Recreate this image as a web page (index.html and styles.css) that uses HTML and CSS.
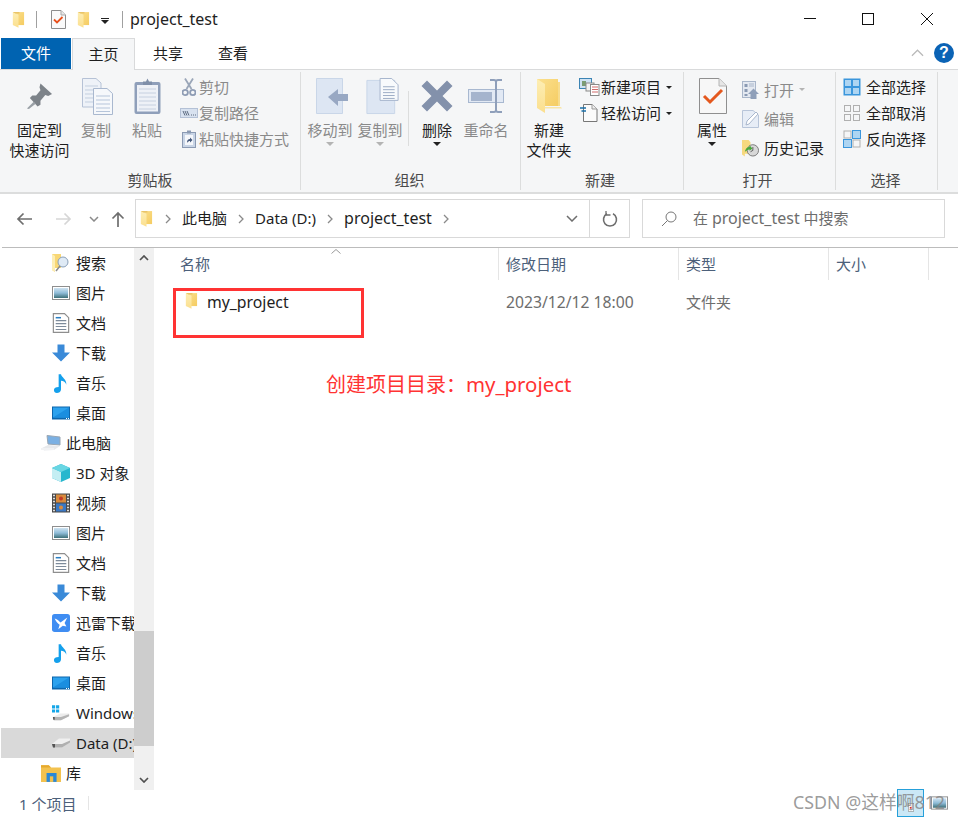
FILE: index.html
```html
<!DOCTYPE html>
<html lang="zh-CN">
<head>
<meta charset="utf-8">
<title>project_test</title>
<link rel="stylesheet" href="styles.css">
</head>
<body>
<svg class="defs" aria-hidden="true">
  <defs>
    <linearGradient id="fy" x1="0" y1="0" x2="1" y2="1"><stop offset="0" stop-color="#fbe08e"/><stop offset="1" stop-color="#f5cc62"/></linearGradient>
    <linearGradient id="fp" x1="0" y1="0" x2="0" y2="1"><stop offset="0" stop-color="#fdeeb4"/><stop offset="1" stop-color="#fbdf8e"/></linearGradient>
    <linearGradient id="sky" x1="0" y1="0" x2="0" y2="1"><stop offset="0" stop-color="#cfe3f1"/><stop offset=".5" stop-color="#8fbcd8"/><stop offset="1" stop-color="#3d6f78"/></linearGradient>
    <symbol id="folder" viewBox="0 0 14 18"><path d="M1 1H13V15H5L1 15Z" fill="url(#fy)"/><path d="M1 1L7 4V18L1 15Z" fill="url(#fp)"/><path d="M1 1H8V2.500H3.600Z" fill="#e9c469"/></symbol>
    <symbol id="doccheck" viewBox="0 0 15 19"><path d="M.5.5H10L14.500 5V18.500H.5Z" fill="#fafafa" stroke="#8d8d8d"/><path d="M10 .5V5H14.500" fill="#e8e8e8" stroke="#a8a8a8"/><path d="M3 9.500L6 12.500L11.500 7" fill="none" stroke="#e8501c" stroke-width="1.800"/></symbol>
    <symbol id="pin" viewBox="0 0 28 28"><path d="M15 1L27 12L23 14L20 13L15 19L15 23L12 25L4 16L6.500 13.500L10.500 13.500L15 8L14 5Z" fill="#7d8389"/><path d="M8 20L1 27L3 27.500L10 22Z" fill="#9aa0a6"/></symbol>
    <symbol id="copy" viewBox="0 0 31 37"><path d="M.5.5H14L19 5V29H.5Z" fill="#eef2f8" stroke="#b6c2d6"/><path d="M3 8H16M3 12H16M3 16H16M3 20H16M3 24H16" stroke="#c3cfdf"/><path d="M11.500 10.500H25L30.500 15.500V36.500H11.500Z" fill="#f6f8fb" stroke="#a9b8cf"/><path d="M14 18H28M14 22H28M14 26H28M14 30H28M14 33.500H28" stroke="#b6c5da"/></symbol>
    <symbol id="paste" viewBox="0 0 27 37"><path d="M2.500 4H24.500A2 2 0 0 1 26.500 6V34A2 2 0 0 1 24.500 36H2.500A2 2 0 0 1 .5 34V6A2 2 0 0 1 2.500 4Z" fill="#8f9fba"/><rect x="3" y="7" width="21" height="26.500" fill="#eef1f7"/><path d="M5 11H22M5 15H22M5 19H22M5 23H22M5 27H22M5 31H22" stroke="#c6d0e0"/><path d="M9 3.500H12L13.500 .5L15 3.500H18V7H9Z" fill="#7f8fa9"/></symbol>
    <symbol id="scissors" viewBox="0 0 14 19"><path d="M3 .5L9.500 11M11 .5L4.500 11" stroke="#9aa6b8" stroke-width="1.800" fill="none"/><circle cx="3.200" cy="14.500" r="2.700" fill="none" stroke="#8e9cb4" stroke-width="1.800"/><circle cx="10.800" cy="14.500" r="2.700" fill="none" stroke="#8e9cb4" stroke-width="1.800"/></symbol>
    <symbol id="pathi" viewBox="0 0 18 12"><rect x=".5" y="1.500" width="17" height="9" fill="#d8e2f0" stroke="#b4c1d6"/><path d="M3 4L5 8.500M5 4L7 8.500M7 4L9 8.500" stroke="#5c6a80"/><path d="M11 8H12M13 8H14M15 8H16" stroke="#5c6a80"/></symbol>
    <symbol id="shortcut" viewBox="0 0 14 18"><rect x=".5" y="2.500" width="13" height="15" fill="#c9d5e6" stroke="#8b9ab3"/><rect x="3" y="5" width="8" height="10" fill="#f5f7fb"/><path d="M5 .5H9V3.500H5Z" fill="#8b9ab3"/><path d="M5 13C5 10 6 9 8 9V7.500L10.500 10L8 12.500V11C7 11 6 11.500 5 13Z" fill="#44587a"/></symbol>
    <symbol id="moveto" viewBox="0 0 33 37"><path d="M.5.5H26.500V35.500H.5Z" fill="#dde6f3" stroke="#c9d6e8"/><path d="M12 19L22 11V16H32V23H22V28L12 19Z" fill="#98a8c3"/></symbol>
    <symbol id="copyto" viewBox="0 0 33 38"><path d="M.5 2.500H29V36.500H.5Z" fill="#dde6f3" stroke="#c9d6e8"/><path d="M14 .5H26L32.500 7V23H14Z" fill="#f8fafc" stroke="#a5b4cc"/><path d="M17 9H29M17 12H29M17 15H29M17 18H29M17 21H29" stroke="#9cacc4"/></symbol>
    <symbol id="del" viewBox="0 0 32 32"><path d="M6 .5L16 10.500L26 .5L31.500 6L21.500 16L31.500 26L26 31.500L16 21.500L6 31.500L.5 26L10.500 16L.5 6Z" fill="#8391ab"/></symbol>
    <symbol id="rename" viewBox="0 0 36 34"><rect x=".5" y="10.500" width="35" height="13" fill="#e2e9f4" stroke="#a8b8d0"/><rect x="3" y="13" width="21" height="9" fill="#a5b4cd"/><path d="M22 1H26C27.500 1 28 2 28 3V31C28 32 27.500 33 26 33H22M34 1H30C28.500 1 28 2 28 3M28 31C28 32 28.500 33 30 33H34" fill="none" stroke="#8f9fba" stroke-width="2"/></symbol>
    <symbol id="bigfolder" viewBox="0 0 26 36"><path d="M1 1H22V28H9V30H1Z" fill="url(#fy)"/><path d="M22 4H24V28H22Z" fill="#f7dc8d"/><path d="M1 1L9 6V35L1 30Z" fill="url(#fp)"/><path d="M9 29H25L26 30.500H9Z" fill="#f9e5a6"/></symbol>
    <symbol id="newitem" viewBox="0 0 21 18"><rect x=".5" y=".5" width="12" height="10" fill="#cfe2f3" stroke="#3c84b4"/><rect x="3" y="3" width="4" height="5" fill="#7b9c72"/><rect x="7" y="5" width="8" height="8" fill="#f2f2f2" stroke="#8a8a8a"/><rect x="11.500" y="6.500" width="8.500" height="11" fill="#fff" stroke="#8a8a8a"/><path d="M13 9H19M13 11.500H19M13 14H19" stroke="#d06a6a"/></symbol>
    <symbol id="easy" viewBox="0 0 18 18"><path d="M3.500.5H12L17 5V17.500H3.500Z" fill="#fbfbfb" stroke="#777"/><path d="M12 .5V5H17" fill="#eee" stroke="#999"/><path d="M0 4H6M1.500 7H6" stroke="#1a6fa8" stroke-width="1.400"/></symbol>
    <symbol id="bigprops" viewBox="0 0 28 36"><path d="M.5.5H20L27.500 8V35.500H.5Z" fill="#f7f7f7" stroke="#8f8f8f"/><path d="M20 .5V8H27.500" fill="#e6e6e6" stroke="#b4b4b4"/><path d="M5 18L11 24L23 12" fill="none" stroke="#e4581e" stroke-width="3"/></symbol>
    <symbol id="openi" viewBox="0 0 17 18"><rect x=".5" y=".5" width="13" height="16" fill="#e4e9f1" stroke="#a9b6ca"/><rect x="2.500" y="3" width="3" height="3" fill="#8a9ab3"/><rect x="2.500" y="8" width="3" height="3" fill="#8a9ab3"/><rect x="2.500" y="13" width="3" height="2" fill="#8a9ab3"/><path d="M7 3H12M7 5H12" stroke="#a9b6ca"/><path d="M6 13L11.500 7.500L17 13H14.500V18H8.500V13Z" fill="#8f9fb9"/></symbol>
    <symbol id="editi" viewBox="0 0 17 18"><path d="M.5.5H11L16.500 5V17.500H.5Z" fill="#e7edf6" stroke="#b8c5d9"/><path d="M4 15L5 11L14 2L16 4L7 14Z" fill="#fff" stroke="#a9b7cc"/></symbol>
    <symbol id="history" viewBox="0 0 18 18"><path d="M0 .5H7L9 3V15H3V18L0 16Z" fill="#f6d97f"/><circle cx="11.500" cy="11.500" r="6" fill="#d8d8d8" stroke="#777"/><path d="M11.500 8V11.500L9 13" fill="none" stroke="#555"/><path d="M3 13C4 9 6 8 8 8V6L11 9.500L8 12V10.500C6 10.500 5 11.500 3 13Z" fill="#4aa83a"/></symbol>
    <symbol id="selall" viewBox="0 0 18 18"><rect x=".5" y=".5" width="17" height="17" fill="#3b96dc"/><rect x="2" y="2" width="6" height="6" fill="#aed5f2"/><rect x="10" y="2" width="6" height="6" fill="#aed5f2"/><rect x="2" y="10" width="6" height="6" fill="#aed5f2"/><rect x="10" y="10" width="6" height="6" fill="#aed5f2"/></symbol>
    <symbol id="selnone" viewBox="0 0 18 18"><rect x="1.500" y="1.500" width="6" height="6" fill="none" stroke="#b0b0b0"/><rect x="10.500" y="1.500" width="6" height="6" fill="none" stroke="#b0b0b0"/><rect x="1.500" y="10.500" width="6" height="6" fill="none" stroke="#b0b0b0"/><rect x="10.500" y="10.500" width="6" height="6" fill="none" stroke="#b0b0b0"/></symbol>
    <symbol id="selinv" viewBox="0 0 18 18"><rect x="1" y="1" width="7" height="7" fill="none" stroke="#b0b0b0"/><rect x="9.500" y=".5" width="8" height="8" fill="#aed5f2" stroke="#3b96dc"/><rect x=".5" y="9.500" width="8" height="8" fill="#aed5f2" stroke="#3b96dc"/><rect x="10" y="10" width="7" height="7" fill="none" stroke="#b0b0b0"/></symbol>
    <symbol id="searchf" viewBox="0 0 18 18"><path d="M0 0H9V14H3V18L0 16Z" fill="#f8d775"/><path d="M0 0L3 2V18L0 16Z" fill="#fdeeb4"/><circle cx="11" cy="8" r="5" fill="#dfeaf5" stroke="#8aa0b8"/><path d="M8 12L4 17" stroke="#8a8a8a" stroke-width="1.500"/></symbol>
    <symbol id="pics" viewBox="0 0 18 14"><rect x=".5" y=".5" width="17" height="13" fill="#fff" stroke="#8e8e8e"/><rect x="2" y="2" width="14" height="10" fill="url(#sky)"/></symbol>
    <symbol id="docs" viewBox="0 0 14 17"><path d="M.5.5H10L13.500 4V16.500H.5Z" fill="#fff" stroke="#8e8e8e"/><path d="M2.500 6.500H11.500M2.500 9H11.500M2.500 11.500H11.500M2.500 14H11.500" stroke="#7d8b9b"/><path d="M2.500 4H7" stroke="#2a7fc4" stroke-width="1.300"/></symbol>
    <symbol id="down" viewBox="0 0 18 17"><path d="M5.500 0H12.500V8H18L9 17L0 8H5.500Z" fill="#3a8ad8"/></symbol>
    <symbol id="music" viewBox="0 0 12 17"><path d="M4 1H6C6.500 4 11 5 10.500 10C10 7.500 8 6.500 6 6.500V14C6 16 4 17 2.500 17C1 17 0 16 0 14.500C0 13 1.500 12 4 12Z" fill="#14a0ec"/></symbol>
    <symbol id="desk" viewBox="0 0 18 13"><rect width="18" height="13" fill="#0c66ad"/><rect x="1" y="1" width="16" height="10" fill="#2ca2ee"/><path d="M1 11L17 1V11Z" fill="#1a8ee0"/><path d="M14 12H15M16 12H17" stroke="#fff"/></symbol>
    <symbol id="pc" viewBox="0 0 20 16"><path d="M6 .5L19 2V10L7 9Z" fill="#7bb0e3" stroke="#9aa6b2"/><path d="M1 13L7 10L19 11L13 15L3 15.500Z" fill="#e7e9ec"/><path d="M0 13H13V15H0Z" fill="#f1f2f4"/></symbol>
    <symbol id="cube" viewBox="0 0 18 18"><path d="M9 0L18 4V14L9 18L0 14V4Z" fill="#27b7ce"/><path d="M0 4L9 8V18L0 14Z" fill="#c4eef3"/><path d="M9 0L18 4L9 8L0 4Z" fill="#69d6e3"/></symbol>
    <symbol id="video" viewBox="0 0 18 19"><rect width="18" height="19" fill="#4a4a4a"/><path d="M1 2H3M1 5H3M1 8H3M1 11H3M1 14H3M1 17H3M15 2H17M15 5H17M15 8H17M15 11H17M15 14H17M15 17H17" stroke="#ddd" stroke-width="1.400"/><rect x="4" y="1" width="10" height="8" fill="#d88a3c"/><rect x="4" y="10" width="10" height="8" fill="#3a78c4"/><circle cx="9" cy="5" r="2" fill="#c23a2a"/><circle cx="9" cy="14" r="2" fill="#d88a3c"/></symbol>
    <symbol id="thunder" viewBox="0 0 20 20"><rect width="20" height="20" rx="3" fill="#3f8df2"/><path d="M3 5C6 6 8 8 9.500 9.500L17 4L14 10L16 14L12 13L7 17L8.500 12C6 10 4 8 3 5Z" fill="#fff"/></symbol>
    <symbol id="win" viewBox="0 0 20 17"><path d="M0 0H3.500V3.500H0ZM4.500 0H8V3.500H4.500ZM0 4.500H3.500V8H0ZM4.500 4.500H8V8H4.500Z" fill="#14a6e8"/><path d="M1 13L9 9H19V12L10 16.500H2Z" fill="#ececec"/><path d="M1 13H10L19 10V12L10 16.500H2Z" fill="#b4b4b4"/><path d="M1 13L3 13V16L1.500 16Z" fill="#555"/></symbol>
    <symbol id="drive" viewBox="0 0 18 10"><path d="M0 6L7 .5H18V4L10 9.500H1Z" fill="#f0f0f0"/><path d="M0 6H10L18 2.500V4.500L10 9.500H1Z" fill="#b0b0b0"/><path d="M0 6H3V9.500H1Z" fill="#555"/></symbol>
    <symbol id="lib" viewBox="0 0 18 16"><path d="M0 1H7L9 3H18V16H0Z" fill="#f3c24f"/><path d="M0 1H7L9 3H0Z" fill="#e6a92e"/><rect x="5" y="8" width="9" height="8" fill="#2a88d8"/><rect x="8" y="11" width="3" height="5" fill="#f3c24f"/></symbol>
    <symbol id="viewdetails" viewBox="0 0 10 14"><rect x=".5" y=".5" width="9" height="13" fill="#fff" stroke="#888"/><rect x="3" y="6" width="3" height="3" fill="#c33"/></symbol>
  </defs>
</svg>

<div class="window">
  <header class="titlebar">
    <div class="qat">
      <svg class="i-qf"><use href="#folder"/></svg>
      <span class="vsep"></span>
      <svg class="i-qd"><use href="#doccheck"/></svg>
      <svg class="i-qf"><use href="#folder"/></svg>
      <span class="qat-down"></span>
      <span class="vsep"></span>
      <span class="title lt">project_test</span>
    </div>
    <div class="winbtns">
      <svg class="winbtn" viewBox="0 0 14 14"><path d="M1 6.500H13" stroke="#111" stroke-width="1"/></svg>
      <svg class="winbtn" viewBox="0 0 14 14"><rect x="1.500" y="1.500" width="11" height="11" fill="none" stroke="#111"/></svg>
      <svg class="winbtn" viewBox="0 0 14 14"><path d="M1 1L13 13M13 1L1 13" stroke="#111" stroke-width="1"/></svg>
    </div>
  </header>

  <nav class="tabs">
    <span class="tab tab-file">文件</span>
    <span class="tab tab-active">主页</span>
    <span class="tab">共享</span>
    <span class="tab">查看</span>
    <svg class="collapse" viewBox="0 0 14 8"><path d="M1 7L7 1L13 7" fill="none" stroke="#b9b9b9" stroke-width="1.300"/></svg>
    <span class="help">?</span>
  </nav>

  <section class="ribbon">
    <div class="group g1">
      <div class="group-body">
        <div class="big b75"><span class="bigicon"><svg class="i-pin"><use href="#pin"/></svg></span><span class="biglabel">固定到<br>快速访问</span></div>
        <div class="big b38 off"><span class="bigicon"><svg class="i-copy"><use href="#copy"/></svg></span><span class="biglabel">复制</span></div>
        <div class="big b64 off"><span class="bigicon"><svg class="i-paste"><use href="#paste"/></svg></span><span class="biglabel">粘贴</span></div>
        <div class="smalls">
          <div class="small off"><span class="sicon"><svg class="i-sc"><use href="#scissors"/></svg></span>剪切</div>
          <div class="small off"><span class="sicon"><svg class="i-path"><use href="#pathi"/></svg></span>复制路径</div>
          <div class="small off"><span class="sicon"><svg class="i-short"><use href="#shortcut"/></svg></span>粘贴快捷方式</div>
        </div>
      </div>
      <div class="group-label">剪贴板</div>
    </div>

    <div class="group g2">
      <div class="group-body">
        <div class="big b50 off"><span class="bigicon"><svg class="i-move"><use href="#moveto"/></svg></span><span class="biglabel">移动到</span><span class="caret caret-off"></span></div>
        <div class="big b50 off"><span class="bigicon"><svg class="i-move"><use href="#copyto"/></svg></span><span class="biglabel">复制到</span><span class="caret caret-off"></span></div>
        <span class="gsep"></span>
        <div class="big b50"><span class="bigicon"><svg class="i-del"><use href="#del"/></svg></span><span class="biglabel">删除</span><span class="caret"></span></div>
        <div class="big b48 off"><span class="bigicon"><svg class="i-ren"><use href="#rename"/></svg></span><span class="biglabel">重命名</span></div>
      </div>
      <div class="group-label">组织</div>
    </div>

    <div class="group g3">
      <div class="group-body">
        <div class="big b56"><span class="bigicon"><svg class="i-bf"><use href="#bigfolder"/></svg></span><span class="biglabel">新建<br>文件夹</span></div>
        <div class="smalls">
          <div class="small"><span class="sicon s-wide"><svg class="i-new"><use href="#newitem"/></svg></span>新建项目<span class="caret caret-inline"></span></div>
          <div class="small"><span class="sicon s-wide"><svg class="i-easy"><use href="#easy"/></svg></span>轻松访问<span class="caret caret-inline"></span></div>
        </div>
      </div>
      <div class="group-label">新建</div>
    </div>

    <div class="group g4">
      <div class="group-body">
        <div class="big b56"><span class="bigicon"><svg class="i-prop"><use href="#bigprops"/></svg></span><span class="biglabel">属性</span><span class="caret"></span></div>
        <div class="smalls smalls-tall">
          <div class="small off"><span class="sicon"><svg class="i-17"><use href="#openi"/></svg></span>打开<span class="caret caret-inline caret-off"></span></div>
          <div class="small off"><span class="sicon"><svg class="i-17"><use href="#editi"/></svg></span>编辑</div>
          <div class="small"><span class="sicon"><svg class="i-17"><use href="#history"/></svg></span>历史记录</div>
        </div>
      </div>
      <div class="group-label">打开</div>
    </div>

    <div class="group g5">
      <div class="group-body">
        <div class="smalls">
          <div class="small"><span class="sicon"><svg class="i-18"><use href="#selall"/></svg></span>全部选择</div>
          <div class="small"><span class="sicon"><svg class="i-18"><use href="#selnone"/></svg></span>全部取消</div>
          <div class="small"><span class="sicon"><svg class="i-18"><use href="#selinv"/></svg></span>反向选择</div>
        </div>
      </div>
      <div class="group-label">选择</div>
    </div>
  </section>

  <section class="addressrow">
    <div class="navbtns">
      <svg class="nav-back" viewBox="0 0 16 14"><path d="M16 7H2M7.500 1.500L2 7L7.500 12.500" fill="none" stroke="#6e6e6e" stroke-width="1.700"/></svg>
      <svg class="nav-fwd" viewBox="0 0 16 14"><path d="M0 7H14M8.500 1.500L14 7L8.500 12.500" fill="none" stroke="#d6d6d6" stroke-width="1.700"/></svg>
      <svg class="nav-drop" viewBox="0 0 10 6"><path d="M1 1L5 5L9 1" fill="none" stroke="#8a8a8a" stroke-width="1.500"/></svg>
      <svg class="nav-up" viewBox="0 0 14 16"><path d="M7 16V2M1.500 7.500L7 2L12.500 7.500" fill="none" stroke="#6e6e6e" stroke-width="1.700"/></svg>
    </div>
    <div class="addrbox">
      <svg class="addr-folder"><use href="#folder"/></svg>
      <svg class="crumb-sep" viewBox="0 0 6 10"><path d="M1 1L5 5L1 9" fill="none" stroke="#8a8a8a" stroke-width="1.300"/></svg>
      <span class="crumb">此电脑</span>
      <svg class="crumb-sep" viewBox="0 0 6 10"><path d="M1 1L5 5L1 9" fill="none" stroke="#8a8a8a" stroke-width="1.300"/></svg>
      <span class="crumb">Data (D:)</span>
      <svg class="crumb-sep" viewBox="0 0 6 10"><path d="M1 1L5 5L1 9" fill="none" stroke="#8a8a8a" stroke-width="1.300"/></svg>
      <span class="crumb lt">project_test</span>
      <svg class="crumb-sep" viewBox="0 0 6 10"><path d="M1 1L5 5L1 9" fill="none" stroke="#8a8a8a" stroke-width="1.300"/></svg>
      <svg class="addr-drop" viewBox="0 0 12 7"><path d="M1 1L6 6L11 1" fill="none" stroke="#6e6e6e" stroke-width="1.500"/></svg>
      <span class="addr-refresh"><svg class="refresh" viewBox="0 0 16 16"><path d="M5 2.800A6.500 6.500 0 1 0 11 2.800" fill="none" stroke="#6e6e6e" stroke-width="1.600"/><path d="M4 0V4.500H8.500" fill="none" stroke="#6e6e6e" stroke-width="1.300" transform="translate(0 -.5)"/></svg></span>
    </div>
    <div class="searchbox">
      <svg class="searchicon" viewBox="0 0 16 16"><circle cx="10" cy="6" r="5" fill="none" stroke="#777" stroke-width="1"/><path d="M6.500 9.500L1 15" stroke="#777" stroke-width="1"/></svg>
      <span class="search-text">在 <span class="lt">project_test</span> 中搜索</span>
    </div>
  </section>

  <main class="main">
    <aside class="sidebar">
      <div class="row"><svg class="ri"><use href="#searchf"/></svg><span>搜索</span></div>
      <div class="row"><svg class="ri"><use href="#pics"/></svg><span>图片</span></div>
      <div class="row"><svg class="ri"><use href="#docs"/></svg><span>文档</span></div>
      <div class="row"><svg class="ri"><use href="#down"/></svg><span>下载</span></div>
      <div class="row"><svg class="ri"><use href="#music"/></svg><span>音乐</span></div>
      <div class="row"><svg class="ri"><use href="#desk"/></svg><span>桌面</span></div>
      <div class="row row-top"><svg class="ri"><use href="#pc"/></svg><span>此电脑</span></div>
      <div class="row"><svg class="ri"><use href="#cube"/></svg><span>3D 对象</span></div>
      <div class="row"><svg class="ri"><use href="#video"/></svg><span>视频</span></div>
      <div class="row"><svg class="ri"><use href="#pics"/></svg><span>图片</span></div>
      <div class="row"><svg class="ri"><use href="#docs"/></svg><span>文档</span></div>
      <div class="row"><svg class="ri"><use href="#down"/></svg><span>下载</span></div>
      <div class="row"><svg class="ri"><use href="#thunder"/></svg><span>迅雷下载</span></div>
      <div class="row"><svg class="ri"><use href="#music"/></svg><span>音乐</span></div>
      <div class="row"><svg class="ri"><use href="#desk"/></svg><span>桌面</span></div>
      <div class="row row-lat"><svg class="ri"><use href="#win"/></svg><span>Windows (C:)</span></div>
      <div class="row row-sel row-lat"><svg class="ri"><use href="#drive"/></svg><span>Data (D:)</span></div>
      <div class="row row-top"><svg class="ri"><use href="#lib"/></svg><span>库</span></div>
    </aside>
    <div class="scrollbar">
      <span class="sb-arrow"><svg class="sb-chev" viewBox="0 0 10 6"><path d="M1 5L5 1L9 5" fill="none" stroke="#505050" stroke-width="1.700"/></svg></span>
      <span class="sb-space"></span>
      <span class="sb-thumb"></span>
      <span class="sb-rest"></span>
      <span class="sb-arrow"><svg class="sb-chev" viewBox="0 0 10 6"><path d="M1 1L5 5L9 1" fill="none" stroke="#505050" stroke-width="1.700"/></svg></span>
    </div>
    <div class="list">
      <svg class="sortcaret" viewBox="0 0 10 5"><path d="M.5 4.500L5 .5L9.500 4.500" fill="none" stroke="#9a9a9a"/></svg>
      <div class="head">
        <span class="col c-name head-name">名称</span>
        <span class="col c-date">修改日期</span>
        <span class="col c-type">类型</span>
        <span class="col c-size">大小</span>
      </div>
      <div class="file">
        <span class="col c-name file-name"><svg class="file-icon"><use href="#folder"/></svg><span class="lt-file">my_project</span></span>
        <span class="col c-date"><span class="lt-date">2023/12/12 18:00</span></span>
        <span class="col c-type">文件夹</span>
      </div>
    </div>
  </main>

  <footer class="status">
    <span class="count">1 个项目</span>
    <span class="status-sep"></span>
    <span class="view-sel"><svg class="view-doc"><use href="#viewdetails"/></svg></span>
    <svg class="view-other"><use href="#pics"/></svg>
  </footer>

  <div class="redbox"></div>
  <div class="note">创建项目目录：<span class="note-lt">my_project</span></div>
  <div class="watermark">CSDN @这样啊812</div>
</div>
</body>
</html>
```

FILE: styles.css
```css
* { box-sizing: border-box; }
html, body { margin: 0; padding: 0; background: #fff; }
body { font-family: "Noto Sans", "Noto Sans CJK SC", sans-serif; font-size: 15px; color: #1e1e1e; overflow: hidden; }
.defs { position: absolute; width: 0; height: 0; }
svg { display: block; flex: none; }
.lt { font-size: 16px; }
.lt-file { font-size: 15.8px; margin-top: 2px; }
.lt-date { font-size: 15.7px; margin-top: 2px; }

.window { position: relative; width: 958px; height: 819px; display: flex; flex-direction: column; overflow: hidden; background: #fff; }

/* title bar */
.titlebar { height: 38px; display: flex; align-items: center; justify-content: space-between; flex: none; }
.qat { display: flex; align-items: center; padding-left: 12px; }
.i-qf { width: 13px; height: 17px; }
.i-qd { width: 15px; height: 19px; margin: 0 11px 0 0; }
.vsep { width: 1px; height: 17px; background: #a0a0a0; margin: 0 14px 0 11px; }
.qat-down { width: 8px; height: 5px; margin: 2px 0 0 11px; border-top: 1px solid #222; position: relative; }
.qat-down::after { content: ""; position: absolute; left: 0; top: 1px; border: 4px solid transparent; border-top-color: #222; border-bottom: 0; }
.qat .qat-down + .vsep { margin-left: 13px; margin-right: 7px; }
.title { line-height: 20px; color: #222; }
.winbtns { display: flex; gap: 44px; padding-right: 24px; margin-top: -1px; }
.winbtn + .winbtn + .winbtn { margin-left: 1px; }
.winbtn { width: 14px; height: 14px; }

/* tabs */
.tabs { height: 32px; display: flex; align-items: stretch; flex: none; padding-left: 1px; position: relative; }
.tab { padding: 0 17.5px; line-height: 31px; color: #1e1e1e; margin-bottom: 1px; }
.tab-file { width: 70px; padding: 0; text-align: center; background: #0063b1; color: #fff; }
.tab-active { width: 63px; padding: 0; text-align: center; margin: 0 .5px 0 1px; background: #f5f6f7; border: 1px solid #d9dadb; border-bottom: 0; z-index: 1; }
.tabs::after { content: ""; position: absolute; left: 0; right: 0; bottom: 0; height: 1px; background: #d9dadb; }
.collapse { width: 13px; height: 8px; margin: 11px 10px 0 auto; }
.help { width: 20px; height: 20px; margin: 5px 4px 0 0; border-radius: 50%; background: #0b63b5; color: #fff; font: bold 16px/20px "Liberation Sans", sans-serif; text-align: center; }

/* ribbon */
.ribbon { height: 124px; flex: none; display: flex; padding: 2px 0 2px; background: #f5f6f7; border-bottom: 2px solid #dcdddd; }
.group { display: flex; flex-direction: column; border-right: 1px solid #dcdddd; }
.g1 { width: 301px; padding-left: 2px; }
.g2 { width: 220px; padding-left: 4px; }
.g3 { width: 163px; }
.g4 { width: 152px; }
.g5 { width: 102px; padding-left: 7px; }
.group-body { flex: 1; display: flex; min-height: 0; }
.group-label { height: 20px; line-height: 20px; text-align: center; color: #4a4a4a; flex: none; margin-left: -2px; }
.g3 .group-label, .g4 .group-label { margin-left: -4px; }
.g5 .group-label { margin-left: -9px; }
.g2 .group-label { margin-left: -6px; }

.big { display: flex; flex-direction: column; align-items: center; flex: none; }
.b75 { width: 75px; } .b38 { width: 38px; } .b64 { width: 64px; } .b50 { width: 50px; } .b48 { width: 48px; } .b56 { width: 56px; }
.bigicon { height: 48px; width: 100%; display: flex; align-items: center; justify-content: center; }
.biglabel { line-height: 20px; text-align: center; white-space: nowrap; color: #1e1e1e; }
.off, .off .biglabel { color: #8a8a8a; }
.caret { width: 0; height: 0; flex: none; margin-top: 2px; border: 4px solid transparent; border-top-color: #222; border-bottom: 0; }
.caret-off { border-top-color: #b4b4b4; }
.caret-inline { margin: 0 0 0 5px; border-width: 3.5px; border-bottom: 0; }
.gsep { width: 1px; height: 55px; margin: 19px 3px 0; background: #dcdddd; flex: none; }

.i-pin { width: 27px; height: 28px; }
.i-copy { width: 31px; height: 37px; margin-left: 2px; }
.i-paste { width: 27px; height: 37px; }
.i-move { width: 33px; height: 37px; margin-left: 5px; }
.i-del { width: 32px; height: 32px; }
.i-ren { width: 36px; height: 34px; }
.i-bf { width: 26px; height: 36px; }
.i-prop { width: 28px; height: 36px; margin-left: 2px; }

.smalls { display: flex; flex-direction: column; padding-top: 2px; }
.small { height: 26px; display: flex; align-items: center; white-space: nowrap; line-height: 26px; }
.smalls-tall { padding-top: 3px; margin-left: 2px; }
.smalls-tall .small { height: 29px; }
.smalls-tall .sicon { width: 22px; justify-content: flex-start; }
.sicon { width: 20px; display: flex; justify-content: center; flex: none; }
.s-wide { width: 24px; }
.g5 .sicon { width: 23px; justify-content: flex-start; }
.i-sc { width: 14px; height: 19px; }
.i-path { width: 18px; height: 12px; }
.i-short { width: 14px; height: 18px; }
.i-new { width: 21px; height: 18px; }
.i-easy { width: 18px; height: 18px; }
.i-17 { width: 17px; height: 18px; }
.i-18 { width: 18px; height: 18px; }

/* address row */
.addressrow { height: 54px; flex: none; display: flex; padding-top: 5px; align-items: flex-start; margin-left: 2px; border-bottom: 1px solid #bcbcbc; }
.navbtns { width: 133px; height: 39px; display: flex; align-items: center; padding-left: 14px; }
.nav-back { width: 16px; height: 14px; }
.nav-fwd { width: 16px; height: 14px; margin-left: 24px; }
.nav-drop { width: 10px; height: 6px; margin-left: 17px; }
.nav-up { width: 14px; height: 16px; margin-left: 12px; }
.addrbox { width: 495px; height: 39px; display: flex; align-items: center; border: 1px solid #d9d9d9; padding-left: 4px; }
.addr-folder { width: 13px; height: 17px; margin-right: 12px; }
.crumb-sep { width: 6px; height: 10px; }
.crumb { margin: -2px 11px 0 11px; }
.addr-drop { width: 12px; height: 7px; margin-left: auto; margin-right: 11px; }
.addr-refresh { width: 40px; height: 100%; display: flex; align-items: center; justify-content: center; border-left: 1px solid #d9d9d9; }
.refresh { width: 16px; height: 16px; }
.searchbox { width: 303px; height: 39px; margin-left: 12px; display: flex; align-items: center; border: 1px solid #d9d9d9; padding-left: 18px; color: #6d6d6d; }
.searchicon { width: 16px; height: 16px; margin-right: 16px; }
.search-text { margin-top: -2px; }

/* main */
.main { flex: 1; min-height: 0; display: flex; }
.sidebar { width: 134px; flex: none; overflow: hidden; padding-left: 1px; }
.row { height: 30px; display: flex; align-items: center; padding-left: 51px; overflow: hidden; white-space: nowrap; }
.row span { margin-top: -2px; }
.row-lat span { margin-top: 0; }
.row .ri { width: 18px; height: 20px; margin-right: 6px; }
.row-top { padding-left: 40px; }
.row-top .ri { width: 20px; margin-right: 5px; }
.row-sel { background: #d9d9d9; }
.scrollbar { width: 20px; flex: none; display: flex; flex-direction: column; background: #f0f0f0; }
.sb-arrow { height: 20px; flex: none; display: flex; align-items: center; justify-content: center; }
.sb-chev { width: 10px; height: 6px; }
.sb-space { height: 363px; flex: none; }
.sb-thumb { height: 115px; flex: none; background: #cdcdcd; }
.sb-rest { flex: 1; }
.list { flex: 1; position: relative; padding-left: 4px; }
.sortcaret { position: absolute; left: 177px; top: 1px; width: 10px; height: 5px; }
.head { height: 32px; display: flex; color: #4c607a; }
.col { display: flex; align-items: center; flex: none; white-space: nowrap; }
.c-name { width: 341px; padding-left: 22px; }
.c-date { width: 180px; padding-left: 7px; }
.c-type { width: 150px; padding-left: 7px; }
.c-size { width: 100px; padding-left: 7px; }
.head .col { border-right: 1px solid #e5e5e5; padding-bottom: 2px; }
.file { display: flex; height: 28px; margin-top: 7px; color: #6d6d6d; }
.file-name { color: #1e1e1e; padding-left: 27px; }
.file-icon { width: 13px; height: 17px; margin-right: 9px; margin-top: -1px; }

/* status */
.status { height: 29px; flex: none; display: flex; align-items: center; padding: 0 0 3px 19px; color: #4c607a; }
.count { width: 69px; }
.status-sep { width: 1px; height: 14px; background: #e5e5e5; }
.view-sel { width: 27px; height: 28px; margin-left: 808px; display: flex; align-items: flex-end; justify-content: center; border: 1px solid #26a0da; background: #cbe8f6; padding-bottom: 4px; }
.view-doc { width: 6px; height: 9px; }
.view-other { width: 17px; height: 14px; margin-left: 7px; }

/* overlays */
.redbox { position: absolute; left: 173px; top: 288px; width: 191px; height: 50px; border: 3px solid #ff3333; }
.note { position: absolute; left: 326px; top: 370px; font-size: 20px; line-height: 28px; color: #ff3333; white-space: nowrap; }
.note-lt { font-size: 20.4px; }
.watermark { position: absolute; right: 13px; top: 790px; font-size: 17.8px; line-height: 24px; color: rgba(130, 130, 130, .8); white-space: nowrap; }
```
